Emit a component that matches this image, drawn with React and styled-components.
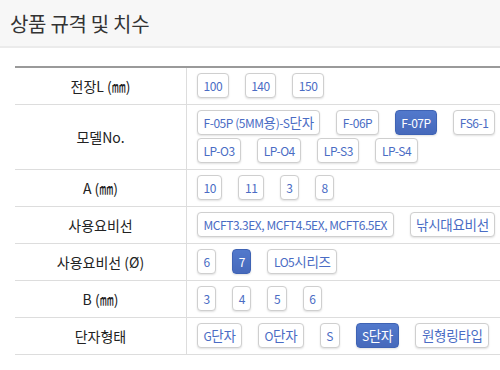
import React from 'react';
import styled, { createGlobalStyle } from 'styled-components';

const GlobalStyle = createGlobalStyle`
  html, body {
    margin: 0;
    padding: 0;
    background: #fff;
  }
  body {
    font-family: "Noto Sans CJK KR", "Noto Sans", sans-serif;
    color: #222;
  }
`;

const Page = styled.div`
  width: 500px;
  height: 370px;
  overflow: hidden;
`;

const Header = styled.div`
  height: 46px;
  display: flex;
  align-items: center;
  padding-left: 10px;
  background: #f7f7f7;
  border-bottom: 2px solid #ebebeb;
`;

const Title = styled.h2`
  margin: 0;
  font-size: 20px;
  font-weight: 400;
  color: #333;
  letter-spacing: -0.3px;
`;

const SpecTable = styled.div`
  margin: 18px 0 0 15px;
  border-top: 2px solid #9a9a9a;
`;

const Row = styled.div`
  display: grid;
  grid-template-columns: 172px 1fr;
  border-bottom: 1px solid #ddd;
`;

const Label = styled.div`
  display: flex;
  align-items: center;
  justify-content: center;
  border-right: 1px solid #ddd;
  font-size: 14px;
  color: #222;
`;

const Options = styled.div`
  display: flex;
  flex-wrap: wrap;
  column-gap: 16px;
  row-gap: 3px;
  padding: 5px 0 6px 10px;
`;

const Option = styled.button`
  height: 25px;
  padding: 0 5.5px;
  font-family: inherit;
  font-size: 12px;
  letter-spacing: -0.45px;
  line-height: 23px;
  border-radius: 4px;
  border: 1px solid ${(p) => (p.$active ? '#3f63b4' : '#cfcfcf')};
  background: ${(p) => (p.$active ? 'linear-gradient(#5279cc, #4669bb)' : '#fff')};
  color: ${(p) => (p.$active ? '#fff' : '#4a6cc4')};
  box-shadow: 0 1px 2px rgba(0, 0, 0, 0.12);
  cursor: pointer;
`;

// Korean runs sit a little larger than the latin text on the chips
const Hangul = styled.span`
  font-size: 13.5px;
  letter-spacing: -0.3px;
`;

const splitHangul = (text) =>
  text
    .split(/([\uAC00-\uD7A3]+)/)
    .filter(Boolean)
    .map((part, i) =>
      /[\uAC00-\uD7A3]/.test(part) ? <Hangul key={i}>{part}</Hangul> : part
    );

const specs = [
  { label: '전장L (㎜)', options: ['100', '140', '150'] },
  {
    label: '모델No.',
    options: ['F-05P (5MM용)-S단자', 'F-06P', 'F-07P', 'FS6-1', 'LP-O3', 'LP-O4', 'LP-S3', 'LP-S4'],
    active: 'F-07P',
  },
  { label: 'A (㎜)', options: ['10', '11', '3', '8'] },
  { label: '사용요비선', options: ['MCFT3.3EX, MCFT4.5EX, MCFT6.5EX', '낚시대요비선'] },
  { label: '사용요비선 (Ø)', options: ['6', '7', 'LO5시리즈'], active: '7' },
  { label: 'B (㎜)', options: ['3', '4', '5', '6'] },
  { label: '단자형태', options: ['G단자', 'O단자', 'S', 'S단자', '원형링타입'], active: 'S단자' },
];

const App = () => {
  return (
    <Page>
      <GlobalStyle />
      <Header>
        <Title>상품 규격 및 치수</Title>
      </Header>
      <SpecTable>
        {specs.map((row) => (
          <Row key={row.label}>
            <Label>{row.label}</Label>
            <Options>
              {row.options.map((opt) => (
                <Option key={opt} $active={opt === row.active}>
                  {splitHangul(opt)}
                </Option>
              ))}
            </Options>
          </Row>
        ))}
      </SpecTable>
    </Page>
  );
};

export default App;
